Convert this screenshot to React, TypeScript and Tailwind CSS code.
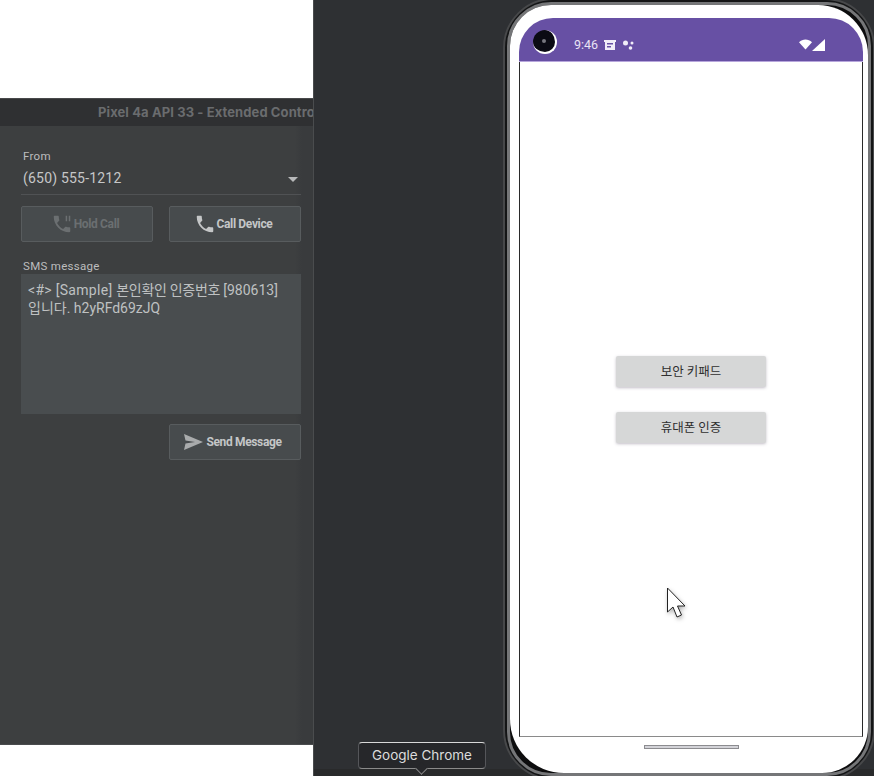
const CALL = "M6.62 10.79c1.44 2.83 3.76 5.14 6.59 6.59l2.2-2.2c.27-.27.67-.36 1.02-.24 1.12.37 2.33.57 3.57.57.55 0 1 .45 1 1V20c0 .55-.45 1-1 1-9.39 0-17-7.61-17-17 0-.55.45-1 1-1h3.5c.55 0 1 .45 1 1 0 1.25.2 2.45.57 3.57.11.35.03.74-.25 1.02l-2.2 2.2z";

function CallIcon({ paused }: { paused?: boolean }) {
  return (
    <svg width="22" height="22" viewBox="0 0 24 24" fill="currentColor">
      <path d={CALL} />
      {paused && <path d="M16 3h1.6v6H16zM19.4 3H21v6h-1.6z" />}
    </svg>
  );
}

function ActionButton({ label, children, dim }: { label: string; children: React.ReactNode; dim?: boolean }) {
  return (
    <div
      className={`flex h-9 w-[132px] items-center justify-center gap-[1px] rounded-[2px] border border-[#585c5e] bg-[#474b4d] pr-[4px] font-['Roboto',sans-serif] text-[12px] font-bold tracking-[-0.35px] ${
        dim ? "text-[#6b6f71]" : "text-[#c4c6c7]"
      }`}
    >
      {children}
      <span>{label}</span>
    </div>
  );
}

function LeftPanel() {
  return (
    <div className="flex w-[313px] shrink-0 flex-col bg-white pt-[98px]">
      <div className="flex h-[647px] flex-col border-b border-[#4a4c4e] bg-[linear-gradient(to_right,#3d3f40_295px,#393b3d_302px)]">
        <div className="flex h-[28px] shrink-0 items-center overflow-hidden whitespace-nowrap border-t border-[#48494b] bg-[#2f3032] pl-[98px] font-['Inter',sans-serif] text-[13px] font-bold tracking-[0.1px] text-[#6a6c6e]">
          Pixel 4a API 33 - Extended Controls
        </div>
        <div className="flex flex-col pl-[21px] pr-[12px] pt-[23px] font-['Roboto','Noto_Sans_CJK_KR',sans-serif]">
          <div className="pl-[2px] text-[11.5px] leading-[14px] tracking-[0.3px] text-[#bcbdbe]">From</div>
          <div className="flex h-[32px] items-center justify-between border-b border-[#505254] pb-[1px] pl-[2px] pr-[3px] text-[14px] tracking-[0.2px] text-[#c6c7c8]">
            <span>(650) 555-1212</span>
            <span className="mt-[2px] h-0 w-0 border-x-[5.5px] border-t-[5.5px] border-x-transparent border-t-[#b8b9ba]" />
          </div>
          <div className="mt-[11px] flex justify-between">
            <ActionButton label="Hold Call" dim>
              <CallIcon paused />
            </ActionButton>
            <ActionButton label="Call Device">
              <CallIcon />
            </ActionButton>
          </div>
          <div className="mt-[17px] pl-[2px] text-[11.5px] leading-[14px] tracking-[0.3px] text-[#bcbdbe]">SMS message</div>
          <div className="mt-[1px] h-[140px] bg-[#494d4f] px-[7px] pt-[7px] text-[14px] leading-[18px] text-[#bfc1c2]">
            <span className="tracking-[0.3px]">&lt;#&gt; [Sample] </span>
            <span className="tracking-[-0.3px]">본인확인 인증번호 </span>
            <span>[980613]</span>
            <br />
            입니다. h2yRFd69zJQ
          </div>
          <div className="mt-[10px] flex justify-end">
            <ActionButton label="Send Message">
              <svg width="19" height="16" viewBox="0 0 19 16" fill="#a9abac" className="mr-[2px]">
                <path d="M0 0L19 8L0 16L1.5 9.5L11 8L1.5 6.5Z" />
              </svg>
            </ActionButton>
          </div>
        </div>
      </div>
    </div>
  );
}

function StatusBar() {
  return (
    <div className="flex h-[44px] items-center rounded-t-[34px] border-b border-[#b7a6dc] bg-[#6750a4] pl-[14px] pr-[38px] font-['Roboto',sans-serif] text-white">
      <div className="mt-[5px] flex h-6 w-6 items-center justify-center rounded-full border-b-2 border-r-2 border-b-white border-r-white bg-[#0b0b14]">
        <div className="h-[4px] w-[4px] rounded-full bg-[#77777f]" />
      </div>
      <span className="ml-[17px] mt-[12px] text-[12.5px] text-[#e9e4f4]">9:46</span>
      <svg width="12" height="10" viewBox="0 0 12 10" fill="#f1edf8" className="ml-[6px] mt-[10px]">
        <path d="M0 0H12V2H11V10H1V2H0ZM3 3V4.5H9V3ZM3 6V7.5H7V6Z" fillRule="evenodd" />
      </svg>
      <svg width="12" height="10" viewBox="0 0 12 10" fill="#f1edf8" className="ml-[7px] mt-[10px]">
        <circle cx="2.5" cy="3" r="2.5" />
        <circle cx="9" cy="3" r="1.5" />
        <circle cx="7.5" cy="8" r="1.8" />
      </svg>
      <div className="flex-1" />
      <svg width="13" height="11" viewBox="0 0 14 11" fill="#ffffff" className="mt-[10px]">
        <path d="M0 3C4 -1 10 -1 14 3L7 11Z" />
      </svg>
      <svg width="13" height="12" viewBox="0 0 13 12" fill="#ffffff" className="mt-[10px]">
        <path d="M13 0V12H0Z" />
      </svg>
    </div>
  );
}

function Phone() {
  return (
    <div className="-mt-[2px] h-[782px] w-[372px] shrink-0 rounded-[50px] border-2 border-[#47484a] bg-[#141516] p-[2px]">
      <div className="h-full rounded-[44px] border-[3px] border-[#757678] bg-[#0d0d0e]">
        <div className="flex h-full flex-col rounded-tl-[41px] rounded-tr-[50px] rounded-bl-[54px] rounded-br-[46px] bg-white pl-[9px] pr-[5px] pt-[13px]">
          <StatusBar />
          <div className="relative flex h-[675px] flex-col items-center border-x border-b border-x-[#2a2a2a] border-b-[#8a8a8a] pt-[294px] font-['Noto_Sans_CJK_KR',sans-serif]">
            <div className="flex h-[31px] w-[150px] items-center justify-center rounded-[2px] bg-[#d6d7d7] text-[12.5px] text-[#2f2f2f] shadow-[0_1px_3px_rgba(120,110,130,0.45)]">
              보안 키패드
            </div>
            <div className="mt-[25px] flex h-[31px] w-[150px] items-center justify-center rounded-[2px] bg-[#d6d7d7] text-[12.5px] text-[#2f2f2f] shadow-[0_1px_3px_rgba(120,110,130,0.45)]">
              휴대폰 인증
            </div>
            <svg width="22" height="36" viewBox="0 0 22 36" className="absolute left-[146px] top-[525px]" style={{ filter: "drop-shadow(1px 2px 2px rgba(0,0,0,0.3))" }}>
              <path d="M1.5 1V25L7 20L11 30L15.5 28L11.5 19H19Z" fill="#ffffff" stroke="#222" strokeWidth="1" />
            </svg>
          </div>
          <div className="mt-[8px] h-[4px] w-[95px] self-center border border-[#8c8c90] bg-[#d3d3d8]" />
        </div>
      </div>
    </div>
  );
}

export default function App() {
  return (
    <div className="flex h-[776px] w-[874px] overflow-hidden">
      <LeftPanel />
      <div className="flex flex-1 border-l border-[#4a4c4e] bg-[linear-gradient(to_bottom,#2e3033_769px,#292a2b_769px)]">
        <div className="flex w-[189px] shrink-0 flex-col justify-end pb-[7px] pl-[44px]">
          <div className="relative flex h-[27px] w-[128px] items-center justify-center rounded-[4px] border border-x-[#55565a] border-b-[#8a8a8a] border-t-[#d8d8d8] bg-[#26272a] font-['Inter',sans-serif] text-[13.5px] text-[#dcdcdc]">
            Google Chrome
            <span className="absolute -bottom-[5px] left-[58px] h-[9px] w-[9px] rotate-45 border-b border-r border-[#8a8a8a] bg-[#26272a]" />
          </div>
        </div>
        <Phone />
      </div>
    </div>
  );
}
